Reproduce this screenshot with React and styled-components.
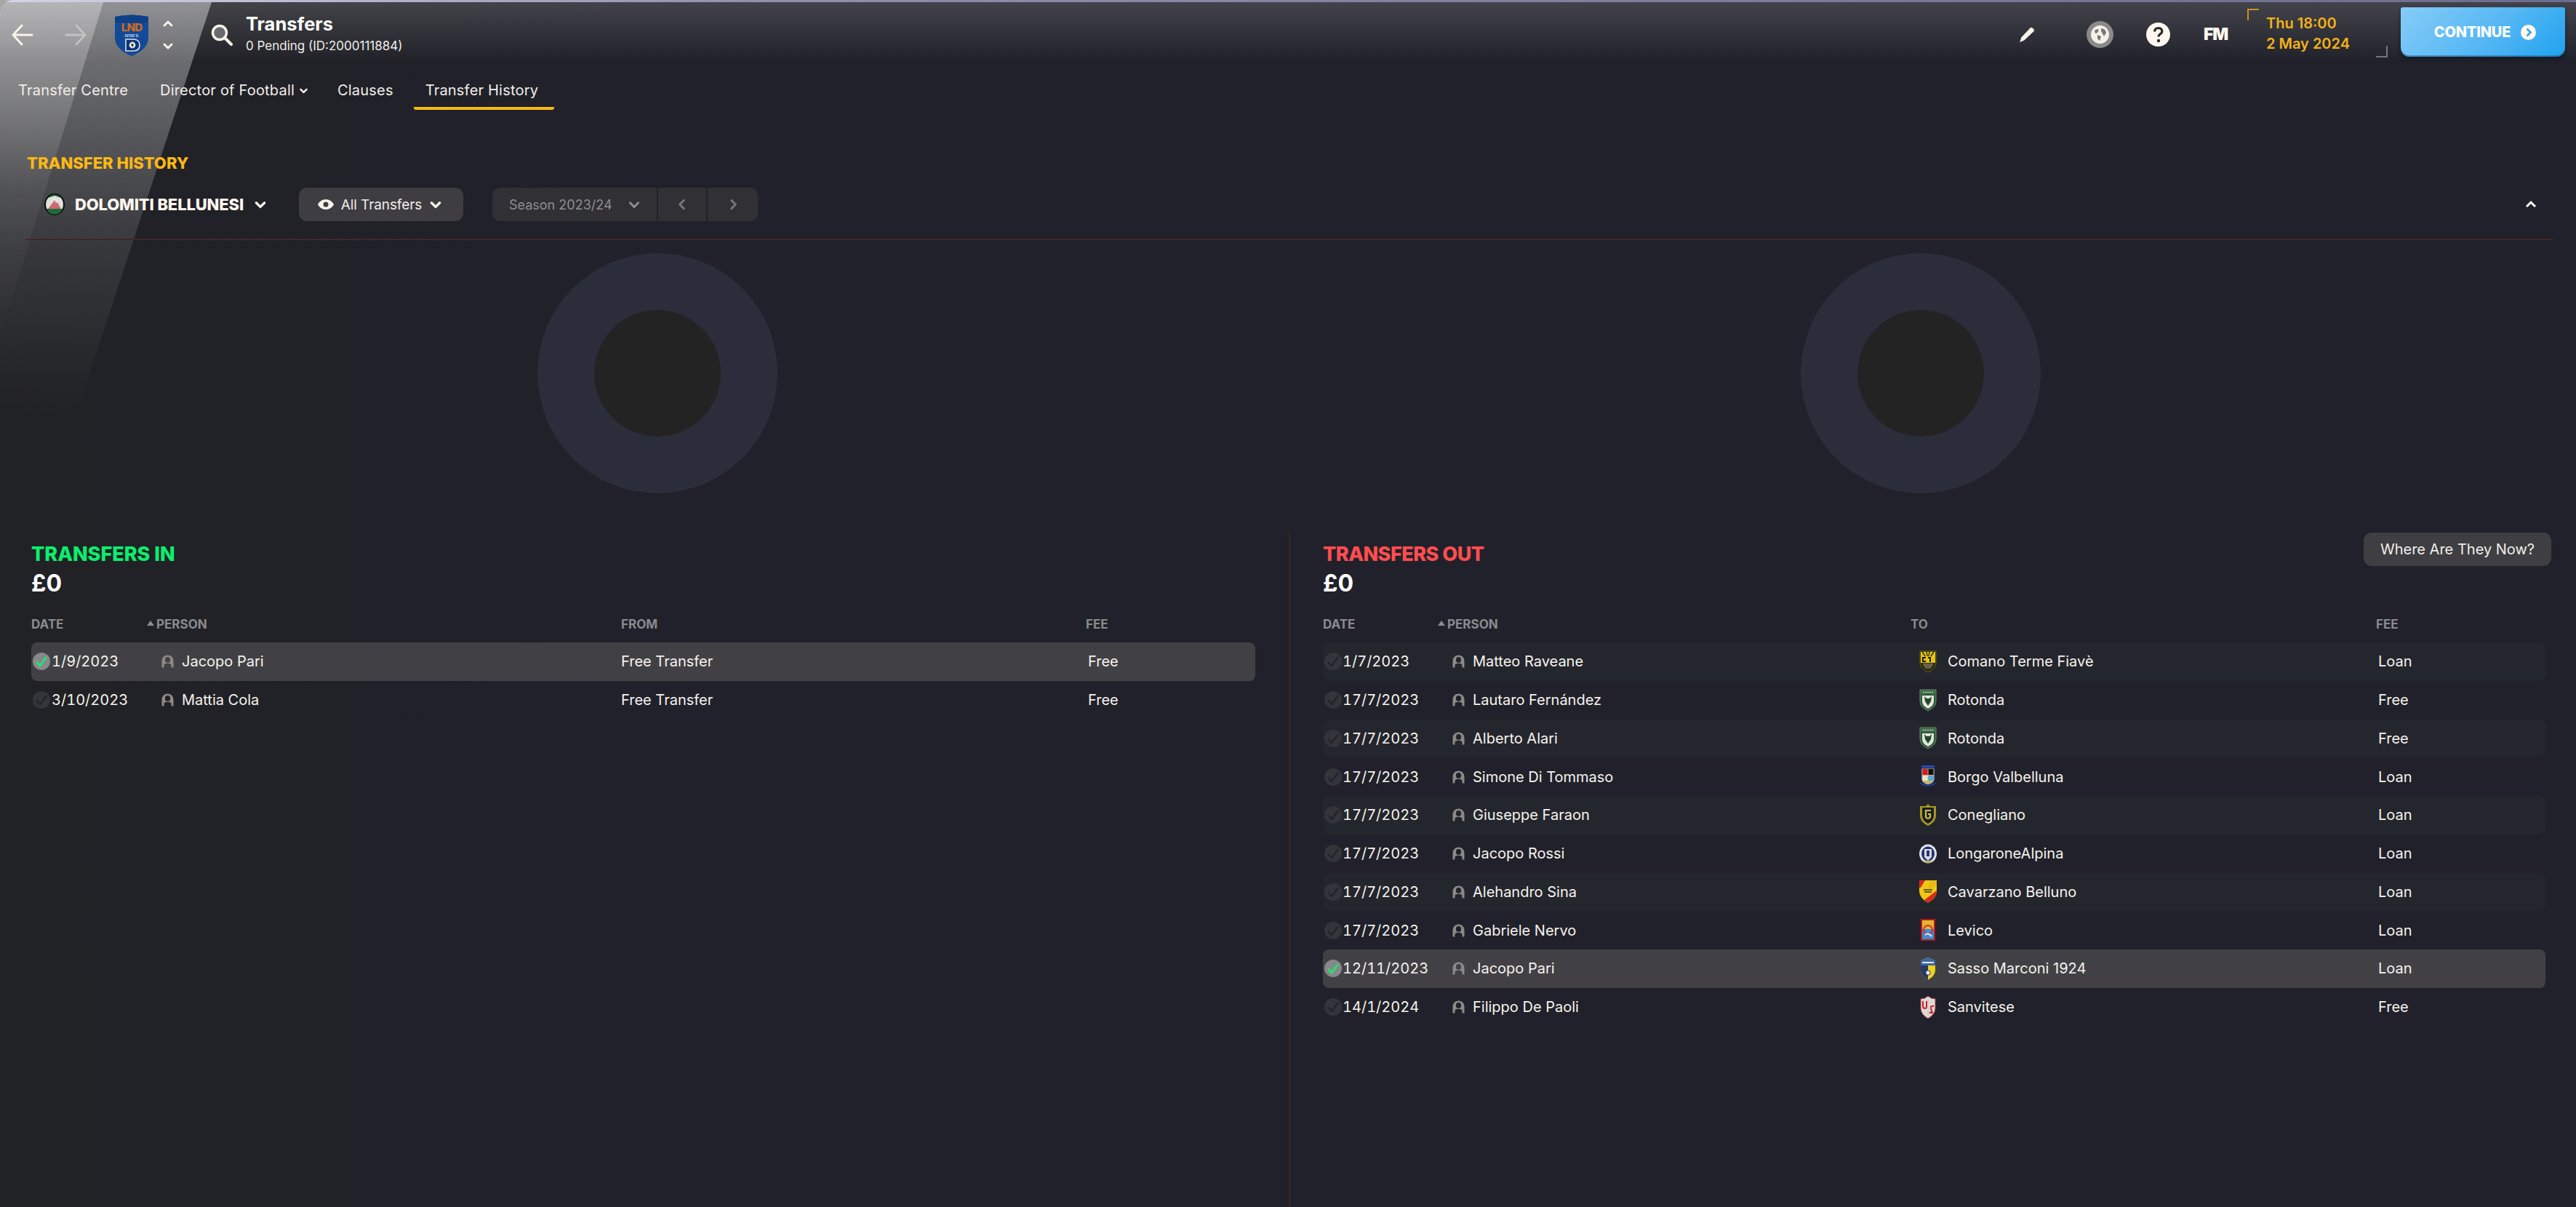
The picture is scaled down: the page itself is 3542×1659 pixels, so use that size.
import React from "react";
import styled, { createGlobalStyle } from "styled-components";

const Global = createGlobalStyle`
  html, body { margin: 0; padding: 0; background: #20212a; }
  * { box-sizing: border-box; }
`;

const Page = styled.div`
  position: relative;
  width: 3542px;
  height: 1659px;
  overflow: hidden;
  display: flex;
  flex-direction: column;
  background: #20212a;
  color: #f6f3ec;
  font-family: Inter, "Liberation Sans", sans-serif;
  font-size: 20px;
`;

const Streak = styled.div`
  position: absolute;
  left: 0;
  top: 0;
  width: 300px;
  height: 620px;
  pointer-events: none;
  clip-path: ${(p) => p.$clip};
  background: ${(p) => p.$fill};
`;

const NeutralWash = styled.div`
  position: absolute;
  left: 0;
  top: 0;
  width: 900px;
  height: 1659px;
  pointer-events: none;
  background: linear-gradient(90deg, rgba(34, 34, 34, 0.55), rgba(34, 34, 34, 0));
`;

const Layer = styled.div`
  position: relative;
  z-index: 1;
  display: flex;
  flex-direction: column;
  flex: 1;
  min-height: 0;
`;

const Header = styled.header`
  height: 92px;
  display: flex;
  align-items: center;
  padding: 0 15px 0 16px;
  border-top: 3px solid transparent;
  border-top-left-radius: 18px;
  background:
    linear-gradient(90deg, #d4d4e6, #8e8eb0 30%, #6c6c8e) top / 100% 3px no-repeat,
    linear-gradient(180deg, rgba(255, 255, 255, 0.16), rgba(255, 255, 255, 0) 94%);
  background-origin: border-box;
`;

const NavIcon = styled.svg`
  flex: none;
  display: block;
  margin-left: ${(p) => p.$ml || 0}px;
  opacity: ${(p) => p.$dim || 1};
`;

const Stepper = styled.div`
  display: flex;
  flex-direction: column;
  gap: 14px;
  margin-left: 17px;
`;

const PageTitle = styled.div`
  margin: -4px 0 0 18px;
  display: flex;
  flex-direction: column;
  gap: 3px;
`;

const TitleMain = styled.div`
  font-size: 25.5px;
  font-weight: 700;
  line-height: 32px;
  color: #fff;
`;

const TitleSub = styled.div`
  font-size: 17px;
  line-height: 22px;
  color: #efece6;
`;

const RightTools = styled.div`
  margin-left: auto;
  display: flex;
  align-items: center;
  align-self: stretch;
`;

const FmMark = styled.div`
  margin-left: 46px;
  width: 33px;
  font-size: 23px;
  font-weight: 900;
  letter-spacing: -1.2px;
  color: #fff8ef;
  line-height: 1;
  font-family: Inter, sans-serif;
`;

const DateBox = styled.div`
  position: relative;
  align-self: flex-start;
  margin: 9px 0 0 27px;
  width: 193px;
  height: 67px;
  padding: 6px 0 0 26px;
  color: #f4b216;
  font-size: 20px;
  font-weight: 600;
  line-height: 28px;
  &::before {
    content: "";
    position: absolute;
    left: 0;
    top: 0;
    width: 14px;
    height: 14px;
    border-left: 2px solid #c9951b;
    border-top: 2px solid #c9951b;
  }
  &::after {
    content: "";
    position: absolute;
    right: 0;
    bottom: 0;
    width: 14px;
    height: 14px;
    border-right: 2px solid #77777b;
    border-bottom: 2px solid #77777b;
  }
`;

const ContinueButton = styled.div`
  align-self: flex-start;
  margin: 7px 0 0 18px;
  width: 226px;
  height: 68px;
  border-radius: 3px 3px 12px 12px;
  display: flex;
  align-items: center;
  justify-content: center;
  gap: 14px;
  padding-left: 6px;
  background: linear-gradient(135deg, #86ccf8, #55b7f4 55%, #20a2ee);
  box-shadow: 0 3px 6px rgba(0, 0, 0, 0.35), inset 0 -2px 0 rgba(20, 90, 150, 0.5);
  color: #fff;
  font-size: 20px;
  font-weight: 800;
  letter-spacing: -0.2px;
`;

const TabBar = styled.nav`
  display: flex;
  padding-left: 9px;
  gap: 6px;
`;

const Tab = styled.div`
  display: flex;
  align-items: center;
  gap: 6px;
  height: 59px;
  padding: 9px ${(p) => (p.$menu ? "18px" : "22px")} 0 16px;
  border-bottom: 4px solid ${(p) => (p.$active ? "#fcb813" : "transparent")};
  border-radius: 0 0 3px 3px;
  color: #f1eee8;
  font-size: 20px;
  letter-spacing: 0.2px;
  line-height: 24px;
`;

const Content = styled.main`
  flex: 1;
  min-height: 0;
  display: flex;
  flex-direction: column;
  padding: 61px 32px 0 35px;
`;

const SectionTitle = styled.h1`
  margin: 0 0 0 2px;
  color: #fcb813;
  font-size: 22px;
  line-height: 24px;
  font-weight: 800;
  letter-spacing: 0;
`;

const Toolbar = styled.div`
  margin-top: 22px;
  height: 72px;
  padding: 0 22px 24px 26px;
  display: flex;
  align-items: center;
  border-bottom: 2px solid #42262b;
`;

const ClubPicker = styled.div`
  display: flex;
  align-items: center;
  width: 350px;
  color: #fff8ef;
  font-size: 22px;
  font-weight: 800;
  letter-spacing: -0.15px;
`;

const ClubName = styled.span`
  margin: 0 14px;
`;

const DropButton = styled.div`
  height: 46px;
  width: 226px;
  padding: 0 29px 0 26px;
  display: flex;
  align-items: center;
  justify-content: space-between;
  border-radius: 11px;
  background: #3d3d42;
  color: #f1eee8;
  font-size: 19px;
  letter-spacing: -0.1px;
`;

const SeasonGroup = styled.div`
  margin-left: 40px;
  display: flex;
  gap: 2px;
  height: 46px;
  color: #8e8e92;
  font-size: 18px;
`;

const SeasonCell = styled.div`
  width: ${(p) => p.$w}px;
  display: flex;
  align-items: center;
  justify-content: ${(p) => (p.$main ? "space-between" : "center")};
  padding: ${(p) => (p.$main ? "0 22px 0 23px" : "0")};
  background: #303035;
  &:first-child { border-radius: 11px 0 0 11px; }
  &:last-child { border-radius: 0 11px 11px 0; }
`;

const CollapseIcon = styled.svg`
  margin-left: auto;
  display: block;
`;

const ChartRow = styled.section`
  display: grid;
  grid-template-columns: 1737px 1fr;
  padding-top: 18px;
`;

const Donut = styled.div`
  width: 330px;
  height: 330px;
  margin: 0 auto;
  border-radius: 50%;
  display: flex;
  align-items: center;
  justify-content: center;
  background: #2b2e3a;
`;

const DonutHole = styled.div`
  width: 174px;
  height: 174px;
  border-radius: 50%;
  background: #232323;
`;

const Panels = styled.section`
  flex: 1;
  min-height: 0;
  margin-top: 52px;
  display: grid;
  grid-template-columns: 1737px 1fr;
`;

const Panel = styled.div`
  padding: 2px ${(p) => (p.$side === "out" ? "10px" : "46px")} 0 ${(p) => (p.$side === "out" ? "45px" : "8px")};
  border-left: ${(p) => (p.$side === "out" ? "2px solid #3a2429" : "none")};
`;

const PanelHead = styled.div`
  display: flex;
  justify-content: space-between;
  align-items: flex-start;
`;

const PanelSummary = styled.div`
  padding-top: 16px;
`;

const PanelTitle = styled.h2`
  margin: 0;
  font-size: 27px;
  line-height: 28px;
  font-weight: 800;
  letter-spacing: ${(p) => (p.$tight ? "-0.5px" : "0")};
  color: ${(p) => p.$color};
`;

const PanelTotal = styled.div`
  margin-top: 8px;
  font-size: 32px;
  line-height: 36px;
  font-weight: 700;
  color: #fff;
`;

const PillButton = styled.div`
  margin-right: -8px;
  height: 46px;
  width: 258px;
  display: flex;
  align-items: center;
  justify-content: center;
  border-radius: 11px;
  background: #3e3e43;
  color: #f1eee8;
  font-size: 20px;
`;

const ColumnHead = styled.div`
  margin-top: 28px;
  display: grid;
  grid-template-columns: ${(p) => (p.$side === "out" ? "158px 650px 640px 1fr" : "159px 652px 639px 1fr")};
  height: 20px;
  align-items: center;
  color: #8b8b8f;
  font-size: 17px;
  font-weight: 700;
`;

const SortHead = styled.div`
  display: flex;
  align-items: center;
  gap: 3px;
`;

const SortArrow = styled.span`
  width: 0;
  height: 0;
  margin-top: -3px;
  border-left: 5px solid transparent;
  border-right: 5px solid transparent;
  border-bottom: 7px solid #8b8b8f;
`;

const Rows = styled.div`
  margin-top: 15px;
`;

const Row = styled.div`
  height: 52.75px;
  display: grid;
  grid-template-columns: ${(p) =>
    p.$side === "out" ? "27px 151px 28px 605px 640px 1fr" : "28px 151px 28px 604px 642px 1fr"};
  align-items: center;
  border-radius: 8px;
  background: ${(p) => (p.$selected ? "#414145" : p.$alt ? "#24262d" : "transparent")};
  color: #f6f3ec;
`;

const DateText = styled.span`
  font-variant-numeric: tabular-nums;
`;

const CheckDot = styled.div`
  margin-left: 2px;
  width: 24px;
  height: 24px;
  border-radius: 50%;
  display: flex;
  align-items: center;
  justify-content: center;
  background: ${(p) => (p.$on ? "#88888a" : "#34353b")};
`;

const ClubCell = styled.div`
  display: flex;
  align-items: center;
  gap: 15px;
  padding-left: 9px;
`;

const CrestSlot = styled.div`
  width: 24px;
  height: 30px;
  flex: none;
  display: flex;
  align-items: center;
  justify-content: center;
`;

const IN = [
  { date: "1/9/2023", name: "Jacopo Pari", selected: true, from: "Free Transfer", fee: "Free" },
  { date: "3/10/2023", name: "Mattia Cola", from: "Free Transfer", fee: "Free" },
];

const OUT = [
  { date: "1/7/2023", name: "Matteo Raveane", club: "Comano Terme Fiavè", crest: "comano", fee: "Loan" },
  { date: "17/7/2023", name: "Lautaro Fernández", club: "Rotonda", crest: "rotonda", fee: "Free" },
  { date: "17/7/2023", name: "Alberto Alari", club: "Rotonda", crest: "rotonda", fee: "Free" },
  { date: "17/7/2023", name: "Simone Di Tommaso", club: "Borgo Valbelluna", crest: "borgo", fee: "Loan" },
  { date: "17/7/2023", name: "Giuseppe Faraon", club: "Conegliano", crest: "conegliano", fee: "Loan" },
  { date: "17/7/2023", name: "Jacopo Rossi", club: "LongaroneAlpina", crest: "longarone", fee: "Loan" },
  { date: "17/7/2023", name: "Alehandro Sina", club: "Cavarzano Belluno", crest: "cavarzano", fee: "Loan" },
  { date: "17/7/2023", name: "Gabriele Nervo", club: "Levico", crest: "levico", fee: "Loan" },
  { date: "12/11/2023", name: "Jacopo Pari", club: "Sasso Marconi 1924", crest: "sasso", fee: "Loan", selected: true },
  { date: "14/1/2024", name: "Filippo De Paoli", club: "Sanvitese", crest: "sanvitese", fee: "Free" },
];

const SHIELD = "M1 1 H23 V17 Q23 25 12 30 Q1 25 1 17 Z";

function Chevron({ size = 16, dir = "down", color = "#f6f3ec", width = 3, ml }) {
  const d = {
    down: "M3 6 L8 11 L13 6",
    up: "M3 10 L8 5 L13 10",
    left: "M10 3 L5 8 L10 13",
    right: "M6 3 L11 8 L6 13",
  }[dir];
  return (
    <NavIcon $ml={ml} width={size} height={size} viewBox="0 0 16 16" fill="none">
      <path d={d} stroke={color} strokeWidth={width} strokeLinecap="round" strokeLinejoin="round" />
    </NavIcon>
  );
}

function PersonIcon() {
  return (
    <svg width="17" height="18" viewBox="0 0 17 18" style={{ display: "block" }}>
      <path
        fillRule="evenodd"
        fill="#8c8986"
        d="M8.5 0.5 C13.2 0.5 16.5 4 16.5 9 V17.5 H13.5 V14.5 C13.5 12.8 11.6 11.8 8.5 11.8 C5.4 11.8 3.5 12.8 3.5 14.5 V17.5 H0.5 V9 C0.5 4 3.8 0.5 8.5 0.5 Z M8.5 3 A3.6 3.9 0 1 0 8.5 10.8 A3.6 3.9 0 1 0 8.5 3 Z"
      />
    </svg>
  );
}

function CheckIcon({ on }) {
  return (
    <CheckDot $on={on}>
      <svg width="18" height="16" viewBox="0 0 18 16" fill="none">
        <path d="M2 8.5 L7 14 L16 2" stroke={on ? "#14f070" : "#24252b"} strokeWidth="2.6" />
      </svg>
    </CheckDot>
  );
}

function Crest({ kind }) {
  const svg = (children, w = 24, h = 31) => (
    <svg width={w} height={h} viewBox="0 0 24 31" style={{ display: "block" }}>
      {children}
    </svg>
  );
  switch (kind) {
    case "comano":
      return svg(
        <>
          <path d={SHIELD} fill="#2a2814" stroke="#6d6520" />
          <path d="M2 2 H22 V17 H2 Z" fill="#e4c612" />
          <path d="M4 2 L8 8 M10 2 L11 8 M14 2 L13 8 M20 2 L16 8" stroke="#2a2814" strokeWidth="1.4" />
          <path d="M4 16 V9 H9 V11 H6 V14 H9 V16 Z M12 9 H16 V16 H14 V11 H12 Z" fill="#1c1b10" />
          <path d="M5 19 H19 M6 21.5 H18 M8 24 H16" stroke="#b9b69a" strokeWidth="1.2" />
        </>
      );
    case "rotonda":
      return svg(
        <>
          <path d={SHIELD} fill="#2f5b37" stroke="#6e8a72" />
          <path d="M2 1.5 H22 V7 H2 Z" fill="#3f6d46" />
          <path d="M4 9 H20 V17 Q20 23 12 27 Q4 23 4 17 Z" fill="#dfe6df" />
          <path d="M7 10 L10 13 H14 L17 10 L16 17 L12 23 L8 17 Z" fill="#26442b" />
          <path d="M5 4.5 H19" stroke="#b7c8b9" strokeWidth="1.6" strokeDasharray="2 1" />
        </>
      );
    case "borgo":
      return svg(
        <>
          <path d="M2 26 Q12 32 22 26 L24 23 L12 28 L0 23 Z" fill="#1c3f9a" />
          <path d="M3 0 H21 V3 H3 Z" fill="#2a4ab0" />
          <path d="M3 4 H21 V19 Q21 24 12 27 Q3 24 3 19 Z" fill="#c8b46c" stroke="#1d348c" />
          <rect x="4.5" y="5" width="7" height="8" fill="#d81920" />
          <rect x="12.5" y="5" width="7" height="8" fill="#111" />
          <rect x="4.5" y="14" width="7" height="7" fill="#e8e4d6" />
          <rect x="12.5" y="14" width="7" height="7" fill="#59a6dd" />
        </>
      );
    case "conegliano":
      return svg(
        <>
          <path d="M12 0 L15 3 H23 V16 Q23 25 12 30 Q1 25 1 16 V3 H9 Z" fill="#a6991f" />
          <path d="M4 5 H20 V16 Q20 23 12 27 Q4 23 4 16 Z" fill="#1b1f33" />
          <path d="M16 9 H9 V18 Q12 22 15 18 V14 H12" fill="none" stroke="#d3c226" strokeWidth="2.2" />
        </>
      );
    case "longarone":
      return svg(
        <>
          <ellipse cx="12" cy="15.5" rx="12" ry="13" fill="#dfe0ea" />
          <ellipse cx="12" cy="15.5" rx="9" ry="10" fill="#26306a" />
          <path d="M7 9 H17 V20 L12 25 L7 20 Z" fill="#d9dae2" />
          <path d="M10 11 H14 V19 H10 Z" fill="#2a3572" />
          <path d="M6 25 Q12 30 18 25" stroke="#c2a828" strokeWidth="1.6" fill="none" />
        </>
      );
    case "cavarzano":
      return svg(
        <>
          <path d="M0 0 H24 V15 Q24 24 12 31 Q0 24 0 15 Z" fill="#f0c814" />
          <path d="M24 14 Q24 24 12 31 L7 27 Z" fill="#d9291f" />
          <path d="M0 0 H8 L2 10 H0 Z" fill="#d9291f" />
          <path d="M15 0 H24 V6 L17 12 H12 Z" fill="#e9bb12" />
          <path d="M6 13 H18 M7 16 H17" stroke="#3a3a20" strokeWidth="1.5" />
        </>
      );
    case "levico":
      return svg(
        <>
          <rect x="2" y="0" width="20" height="30" fill="#b8191f" />
          <rect x="4" y="2" width="16" height="12" fill="#e8b52c" />
          <rect x="4" y="14" width="16" height="14" fill="#3a8fd0" />
          <circle cx="12" cy="15" r="6" fill="none" stroke="#d82a3a" strokeWidth="2" />
          <path d="M8 22 Q12 18 17 24" stroke="#e7e7ef" strokeWidth="2" fill="none" />
        </>
      );
    case "sasso":
      return svg(
        <>
          <path d="M12 0 Q20 3 22 5 V18 Q22 25 12 31 Q2 25 2 18 V5 Q4 3 12 0 Z" fill="#ecd21a" />
          <path d="M12 0 Q20 3 22 5 V11 H2 V5 Q4 3 12 0 Z" fill="#3b66a8" />
          <path d="M4 7 H20" stroke="#e5e7ef" strokeWidth="2" />
          <path d="M2 11 V18 Q2 25 12 31 V11 Z" fill="#14286a" opacity="0.9" />
          <circle cx="12" cy="21" r="3.2" fill="#f4f4f4" stroke="#14286a" />
        </>
      );
    case "sanvitese":
      return svg(
        <>
          <path d="M2 4 Q8 4 12 0 Q16 4 22 4 V17 Q22 25 12 31 Q2 25 2 17 Z" fill="#dfd9d8" stroke="#b4423f" />
          <path d="M12 1 V30" stroke="#c9c1c0" strokeWidth="1" />
          <path d="M5 7 V14 Q5 17 8 17 Q10 17 10 14 V7" fill="none" stroke="#c6252a" strokeWidth="2" />
          <path d="M20 14 Q15 13 16 17 T18 23 Q15 24 14 22" fill="none" stroke="#c6252a" strokeWidth="2" />
        </>
      );
    default:
      return null;
  }
}

function ClubBadge() {
  return (
    <svg width="28" height="30" viewBox="0 0 28 30" style={{ display: "block" }}>
      <ellipse cx="14" cy="15" rx="14" ry="15" fill="#0b0b0b" />
      <ellipse cx="14" cy="15" rx="12" ry="13" fill="#dfe0da" />
      <path d="M5 6 A12 13 0 0 1 23 6 L14 3 Z M3 21 A12 13 0 0 0 25 21 Z" fill="#1f6a3b" />
      <path d="M14 5 L24 21 H4 Z" fill="#e6e7e2" />
      <path d="M14 9 L16 13 L18 12 L23 21 H5 Z" fill="#cd6b72" />
    </svg>
  );
}

function LndShield() {
  return (
    <NavIcon $ml={37} width="50" height="58" viewBox="0 0 50 58">
      <path d="M2 4 Q25 -1 48 4 V34 Q47 49 25 58 Q3 49 2 34 Z" fill="#134a97" />
      <path d="M2 4 Q25 -1 48 4 V12 H2 Z" fill="#0f3f86" />
      <text x="25" y="24" textAnchor="middle" fontFamily="Inter, sans-serif" fontSize="15" fontWeight="800" letterSpacing="-0.8" fill="#d46a14">
        LND
      </text>
      <text x="25" y="32" textAnchor="middle" fontFamily="Inter, sans-serif" fontSize="5" fontWeight="700" fill="#c8cfe2">
        SERIE D
      </text>
      <path d="M17 35 H27 Q36 35 36 43 Q36 51 27 51 H17 Z" fill="#0d3470" stroke="#dcdfe9" strokeWidth="1.6" />
      <circle cx="26" cy="43" r="4.4" fill="#e6e6e6" />
      <path d="M24 41 L28 42 L26 46 Z" fill="#222" />
    </NavIcon>
  );
}

function TransferTable({ side, rows }) {
  return (
    <Rows>
      {rows.map((r, i) => (
        <Row key={i} $side={side} $selected={r.selected} $alt={side === "out" && i % 2 === 0}>
          <CheckIcon on={r.selected} />
          <DateText>{r.date}</DateText>
          <PersonIcon />
          <span>{r.name}</span>
          {side === "in" ? (
            <span>{r.from}</span>
          ) : (
            <ClubCell>
              <CrestSlot>
                <Crest kind={r.crest} />
              </CrestSlot>
              <span>{r.club}</span>
            </ClubCell>
          )}
          <span>{r.fee}</span>
        </Row>
      ))}
    </Rows>
  );
}

export default function App() {
  return (
    <Page>
      <Global />
      <NeutralWash />
      <Streak
        $clip="polygon(0 0, 292px 0, 104px 572px, 0 572px)"
        $fill="linear-gradient(180deg, rgba(255,255,255,0.42) 0, rgba(255,255,255,0.2) 230px, rgba(255,255,255,0.1) 340px, rgba(255,255,255,0.015) 520px, rgba(255,255,255,0) 580px)"
      />
      <Streak
        $clip="polygon(0 0, 143px 0, 0 463px)"
        $fill="linear-gradient(180deg, rgba(255,255,255,0.32) 0, rgba(255,255,255,0.06) 260px, rgba(255,255,255,0) 470px)"
      />
      <Layer>
        <Header>
          <NavIcon width="30" height="32" viewBox="0 0 30 32" fill="none">
            <path d="M14 3 L2 16 L14 29 M2 16 H28" stroke="#f8f3ea" strokeWidth="3" strokeLinecap="round" strokeLinejoin="round" />
          </NavIcon>
          <NavIcon $ml={43} $dim={0.4} width="30" height="32" viewBox="0 0 30 32" fill="none">
            <path d="M16 3 L28 16 L16 29 M2 16 H28" stroke="#f8f3ea" strokeWidth="3" strokeLinecap="round" strokeLinejoin="round" />
          </NavIcon>
          <LndShield />
          <Stepper>
            <Chevron dir="up" />
            <Chevron dir="down" />
          </Stepper>
          <NavIcon $ml={51} width="30" height="30" viewBox="0 0 30 30" fill="none">
            <circle cx="12" cy="12" r="9.5" stroke="#f8f3ea" strokeWidth="3.4" fill="rgba(255,255,255,0.28)" />
            <path d="M19 19 L28 28" stroke="#f8f3ea" strokeWidth="4" strokeLinecap="round" />
          </NavIcon>
          <PageTitle>
            <TitleMain>Transfers</TitleMain>
            <TitleSub>0 Pending (ID:2000111884)</TitleSub>
          </PageTitle>
          <RightTools>
            <NavIcon width="22" height="22" viewBox="0 0 22 22">
              <path d="M15.5 1.5 Q17 0.2 18.8 1.6 L20.4 3.2 Q21.6 4.8 20.3 6.2 L7.2 18.6 L1.2 21 L3.2 14.6 Z" fill="#f8f3ea" />
            </NavIcon>
            <NavIcon $ml={71} width="37" height="37" viewBox="0 0 37 37">
              <circle cx="18.5" cy="18.5" r="18.5" fill="#8a8a88" />
              <circle cx="18.5" cy="18.5" r="12.5" fill="#f5f0e8" />
              <path d="M11 13 Q14 10 17 12 L15 16 L12 17 Z M20 10 Q26 10 27 16 L24 21 L22 17 L20 14 Z M15 19 L20 21 L18 27 L15 24 Z" fill="#77767a" />
            </NavIcon>
            <NavIcon $ml={45} width="33" height="33" viewBox="0 0 33 33">
              <circle cx="16.5" cy="16.5" r="16.5" fill="#fff8ef" />
              <path d="M11.5 12.5 Q12 7.5 16.8 7.5 Q21.8 7.8 21.8 12 Q21.8 14.5 19 16 Q17 17.2 17 19.5" fill="none" stroke="#2b2b31" strokeWidth="3.2" />
              <circle cx="17" cy="25" r="2.2" fill="#2b2b31" />
            </NavIcon>
            <FmMark>FM</FmMark>
            <DateBox>
              <div>Thu 18:00</div>
              <div>2 May 2024</div>
            </DateBox>
            <ContinueButton>
              <span>CONTINUE</span>
              <svg width="21" height="21" viewBox="0 0 21 21">
                <circle cx="10.5" cy="10.5" r="10.5" fill="#fff8ef" />
                <path d="M8.5 5.5 L13.5 10.5 L8.5 15.5" fill="none" stroke="#3aa7ec" strokeWidth="2.8" />
              </svg>
            </ContinueButton>
          </RightTools>
        </Header>
        <TabBar>
          <Tab>Transfer Centre</Tab>
          <Tab $menu>
            Director of Football
            <Chevron size={13} width={3} />
          </Tab>
          <Tab>Clauses</Tab>
          <Tab $active>Transfer History</Tab>
        </TabBar>
        <Content>
          <SectionTitle>TRANSFER HISTORY</SectionTitle>
          <Toolbar>
            <ClubPicker>
              <ClubBadge />
              <ClubName>DOLOMITI BELLUNESI</ClubName>
              <Chevron size={18} width={3} />
            </ClubPicker>
            <DropButton>
              <svg width="22" height="14" viewBox="0 0 22 14">
                <path
                  fillRule="evenodd"
                  fill="#f6f3ec"
                  d="M11 0 C16 0 20 3 22 7 C20 11 16 14 11 14 C6 14 2 11 0 7 C2 3 6 0 11 0 Z M11 3.5 A3.5 3.5 0 1 0 11 10.5 A3.5 3.5 0 1 0 11 3.5 Z"
                />
              </svg>
              <span>All Transfers</span>
              <Chevron size={18} width={3} />
            </DropButton>
            <SeasonGroup>
              <SeasonCell $main $w={226}>
                <span>Season 2023/24</span>
                <Chevron size={18} width={2.6} color="#8e8e92" />
              </SeasonCell>
              <SeasonCell $w={66}>
                <Chevron size={18} dir="left" width={2.6} color="#77777b" />
              </SeasonCell>
              <SeasonCell $w={69}>
                <Chevron size={18} dir="right" width={2.6} color="#77777b" />
              </SeasonCell>
            </SeasonGroup>
            <CollapseIcon width="16" height="16" viewBox="0 0 16 16" fill="none">
              <path d="M2 11 L8 5 L14 11" stroke="#fff8ef" strokeWidth="3" />
            </CollapseIcon>
          </Toolbar>
          <ChartRow>
            <Donut>
              <DonutHole />
            </Donut>
            <Donut>
              <DonutHole />
            </Donut>
          </ChartRow>
          <Panels>
            <Panel $side="in">
              <PanelHead>
                <PanelSummary>
                  <PanelTitle $color="#0bee6e">TRANSFERS IN</PanelTitle>
                  <PanelTotal>£0</PanelTotal>
                </PanelSummary>
              </PanelHead>
              <ColumnHead $side="in">
                <span>DATE</span>
                <SortHead>
                  <SortArrow />
                  PERSON
                </SortHead>
                <span>FROM</span>
                <span>FEE</span>
              </ColumnHead>
              <TransferTable side="in" rows={IN} />
            </Panel>
            <Panel $side="out">
              <PanelHead>
                <PanelSummary>
                  <PanelTitle $color="#ff4d4f" $tight>TRANSFERS OUT</PanelTitle>
                  <PanelTotal>£0</PanelTotal>
                </PanelSummary>
                <PillButton>Where Are They Now?</PillButton>
              </PanelHead>
              <ColumnHead $side="out">
                <span>DATE</span>
                <SortHead>
                  <SortArrow />
                  PERSON
                </SortHead>
                <span>TO</span>
                <span>FEE</span>
              </ColumnHead>
              <TransferTable side="out" rows={OUT} />
            </Panel>
          </Panels>
        </Content>
      </Layer>
    </Page>
  );
}
